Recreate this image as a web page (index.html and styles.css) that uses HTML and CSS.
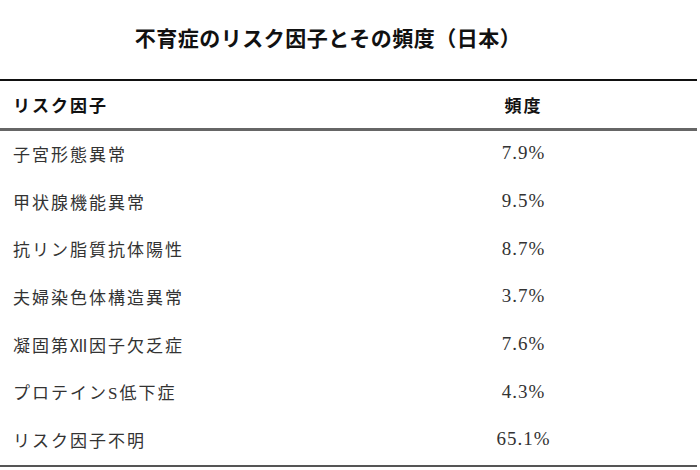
FILE: index.html
```html
<!DOCTYPE html>
<html lang="ja">
<head>
<meta charset="utf-8">
<link rel="stylesheet" href="styles.css">
</head>
<body>
<h1 class="title">不育症のリスク因子とその頻度（日本）</h1>
<table class="risk-table">
  <thead>
    <tr><th class="col-factor">リスク因子</th><th class="col-freq">頻度</th></tr>
  </thead>
  <tbody>
    <tr><td class="col-factor">子宮形態異常</td><td class="col-freq">7.9%</td></tr>
    <tr><td class="col-factor">甲状腺機能異常</td><td class="col-freq">9.5%</td></tr>
    <tr><td class="col-factor">抗リン脂質抗体陽性</td><td class="col-freq">8.7%</td></tr>
    <tr><td class="col-factor">夫婦染色体構造異常</td><td class="col-freq">3.7%</td></tr>
    <tr><td class="col-factor">凝固第Ⅻ因子欠乏症</td><td class="col-freq">7.6%</td></tr>
    <tr><td class="col-factor">プロテインS低下症</td><td class="col-freq">4.3%</td></tr>
    <tr><td class="col-factor">リスク因子不明</td><td class="col-freq">65.1%</td></tr>
  </tbody>
</table>
</body>
</html>
```
FILE: styles.css
```css
html, body {
  margin: 0;
  padding: 0;
  background: #ffffff;
}
body {
  font-family: "Liberation Serif", "Noto Sans CJK JP", serif;
  color: #222;
}
.title {
  margin: 0;
  padding: 27px 44px 0 0;
  height: 79px;
  box-sizing: border-box;
  text-align: center;
  font-size: 21px;
  font-weight: bold;
  line-height: 24px;
  letter-spacing: 0.5px;
  color: #111;
}
.risk-table {
  width: 697px;
  border-collapse: collapse;
  border-top: 2px solid #111;
  border-bottom: 2px solid #555;
}
.risk-table th,
.risk-table td {
  padding: 0 0 0 13px;
  text-align: left;
  font-size: 17px;
  letter-spacing: 2px;
}
.risk-table th {
  height: 47px;
  font-weight: bold;
  color: #111;
  border-bottom: 3px solid #666;
}
.risk-table td {
  height: 44.7px;
  padding-bottom: 3px;
  color: #333;
}
.risk-table .col-factor {
  width: 337px;
}
.risk-table .col-freq {
  text-align: center;
  padding-left: 0;
}
.risk-table td.col-freq {
  font-size: 19px;
  letter-spacing: 1px;
}
```
